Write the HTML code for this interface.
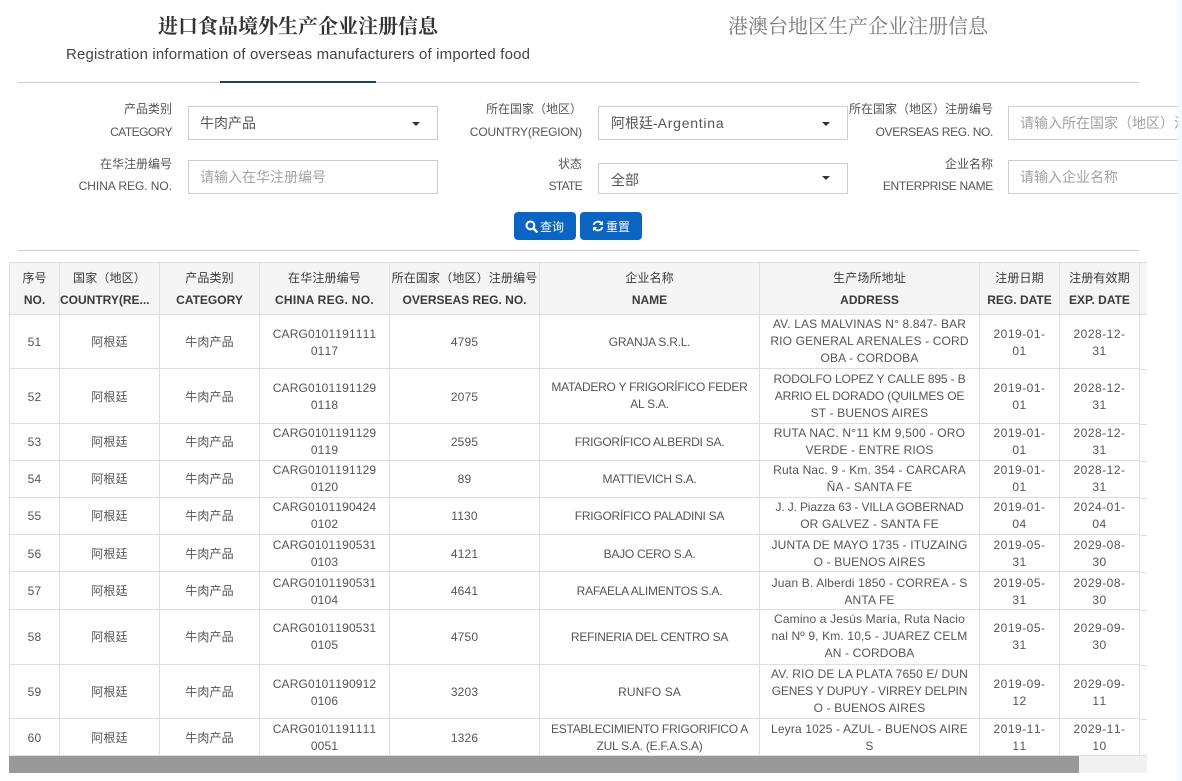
<!DOCTYPE html>
<html lang="zh"><head><meta charset="utf-8"><title>进口食品境外生产企业注册信息</title>
<style>
html,body{margin:0;padding:0;background:#fff;}
body{width:1182px;height:781px;overflow:hidden;position:relative;font-family:"Liberation Sans","Noto Sans CJK SC",sans-serif;color:#555;}
.a{position:absolute;white-space:nowrap;}
.t1{font-family:"Liberation Serif","Noto Serif CJK SC",serif;font-size:20px;line-height:26px;}
.l{font-size:12px;line-height:16px;text-align:right;color:#555;}
.box{position:absolute;box-sizing:border-box;border:1px solid #ccc;background:#fff;font-size:14px;color:#555;padding-left:12px;white-space:nowrap;overflow:hidden;}
.ph{color:#a3a3a3;padding-left:11px;}
.arrow{position:absolute;width:0;height:0;border-left:4.5px solid transparent;border-right:4.5px solid transparent;border-top:4.5px solid #333;}
.btn{position:absolute;top:212px;height:28px;width:62px;border-radius:4px;background:#0a64c2;color:#fff;font-size:12px;line-height:28px;}
.btn span{position:absolute;top:1px;}
table{position:absolute;left:9px;top:262px;border-collapse:collapse;table-layout:fixed;width:1131px;}
td,th{border:1px solid #e3dcdc;padding:0;text-align:center;font-size:12px;line-height:17px;color:#555;font-weight:normal;white-space:nowrap;overflow:hidden;letter-spacing:.15px;}
th{background:#f5f5f5;line-height:22px;color:#3a3a3a;}
th b{font-weight:bold;letter-spacing:0;}
tr.p td{padding-top:2px;}
tr.p td.u{padding-top:0;}
td.v{padding-bottom:2px;}
td:nth-child(4),td:nth-child(8),td:nth-child(9){font-kerning:none;letter-spacing:.15px;}
td:nth-child(8),td:nth-child(9){letter-spacing:.5px;}
td:nth-child(6){letter-spacing:-.25px;}
i{font-style:normal;}
.n{letter-spacing:-.15px;}
.w{letter-spacing:.22px;}
</style></head><body>
<div class="a t1" style="left:158px;top:14px;font-weight:bold;color:#333;">进口食品境外生产企业注册信息</div>
<div class="a" style="left:66px;top:46px;font-size:15px;letter-spacing:.17px;line-height:18px;color:#444;">Registration information of overseas manufacturers of imported food</div>
<div class="a t1" style="left:728px;top:14px;color:#777;">港澳台地区生产企业注册信息</div>
<div class="a" style="left:18px;top:82px;width:1121px;height:1px;background:#ccc;"></div>
<div class="a" style="left:220px;top:81px;width:156px;height:2px;background:#1f3f66;"></div>

<div class="a l" style="right:1010px;top:101px;">产品类别</div>
<div class="a l" style="right:1010px;top:124px;letter-spacing:-.55px;">CATEGORY</div>
<div class="a l" style="right:1010px;top:156px;">在华注册编号</div>
<div class="a l" style="right:1010px;top:178px;letter-spacing:-.05px;">CHINA REG. NO.</div>
<div class="a l" style="right:600px;top:101px;">所在国家（地区）</div>
<div class="a l" style="right:600px;top:124px;letter-spacing:-.15px;">COUNTRY(REGION)</div>
<div class="a l" style="right:600px;top:156px;">状态</div>
<div class="a l" style="right:600px;top:178px;letter-spacing:-.7px;">STATE</div>
<div class="a l" style="right:189px;top:101px;">所在国家（地区）注册编号</div>
<div class="a l" style="right:189px;top:124px;letter-spacing:-.35px;">OVERSEAS REG. NO.</div>
<div class="a l" style="right:189px;top:156px;">企业名称</div>
<div class="a l" style="right:189px;top:178px;letter-spacing:-.3px;">ENTERPRISE NAME</div>

<div class="box" style="left:188px;top:106px;width:250px;height:34px;line-height:32px;padding-left:11px;">牛肉产品</div>
<div class="arrow" style="left:412px;top:122px;"></div>
<div class="box ph" style="left:188px;top:160px;width:250px;height:34px;line-height:33px;">请输入在华注册编号</div>
<div class="box" style="left:598px;top:106px;width:250px;height:34px;line-height:32px;">阿根廷-<span style="letter-spacing:.75px">Argentina</span></div>
<div class="arrow" style="left:822px;top:122px;"></div>
<div class="box" style="left:598px;top:163px;width:250px;height:31px;line-height:32px;">全部</div>
<div class="arrow" style="left:822px;top:176px;"></div>
<div class="box ph" style="left:1008px;top:106px;width:170px;height:34px;line-height:33px;border-right:0;">请输入所在国家（地区）注册编号</div>
<div class="box ph" style="left:1008px;top:160px;width:170px;height:34px;line-height:33px;border-right:0;">请输入企业名称</div>

<div class="btn" style="left:514px;">
<svg style="position:absolute;left:11px;top:8px;" width="13" height="13" viewBox="0 0 12 12"><circle cx="5" cy="5" r="3.6" fill="none" stroke="#fff" stroke-width="1.9"/><path d="M7.6 7.6L10.8 10.8" stroke="#fff" stroke-width="2.2" stroke-linecap="round"/></svg>
<span style="left:26px;">查询</span></div>
<div class="btn" style="left:580px;">
<svg style="position:absolute;left:12px;top:8px;" width="12" height="12" viewBox="0 0 12 12"><path d="M1.6 5A4.5 4.5 0 0 1 9.4 3.2" fill="none" stroke="#fff" stroke-width="1.8"/><path d="M11 .8V5H6.8z" fill="#fff"/><path d="M10.4 7A4.5 4.5 0 0 1 2.6 8.8" fill="none" stroke="#fff" stroke-width="1.8"/><path d="M1 11.2V7H5.2z" fill="#fff"/></svg>
<span style="left:26px;">重置</span></div>
<div class="a" style="left:18px;top:250px;width:1121px;height:1px;background:#ccc;"></div>

<table>
<colgroup><col style="width:50px"><col style="width:100px"><col style="width:100px"><col style="width:130px"><col style="width:150px"><col style="width:220px"><col style="width:220px"><col style="width:80px"><col style="width:80px"></colgroup>
<tr style="height:52px"><th>序号<br><b>NO.</b></th><th>国家（地区）<br><b style="display:block;text-align:left;padding-left:0;margin-right:-5px;">COUNTRY(RE...</b></th><th>产品类别<br><b>CATEGORY</b></th><th>在华注册编号<br><b style="letter-spacing:.3px">CHINA REG. NO.</b></th><th>所在国家（地区）注册编号<br><b>OVERSEAS REG. NO.</b></th><th>企业名称<br><b>NAME</b></th><th>生产场所地址<br><b>ADDRESS</b></th><th>注册日期<br><b>REG. DATE</b></th><th>注册有效期<br><b>EXP. DATE</b></th></tr>
<tr class="p" style="height:54px"><td>51</td><td>阿根廷</td><td>牛肉产品</td><td>CARG0101191111<br>0117</td><td>4795</td><td>GRANJA S.R.L.</td><td class="u">AV. LAS MALVINAS N° 8.847- BAR<br>RIO GENERAL ARENALES - CORD<br>OBA - CORDOBA</td><td>2019-01-<br>01</td><td>2028-12-<br>31</td></tr>
<tr class="p" style="height:55px"><td>52</td><td>阿根廷</td><td>牛肉产品</td><td>CARG0101191129<br>0118</td><td>2075</td><td class="u">MATADERO Y FRIGORÍFICO FEDER<br>AL S.A.</td><td class="u"><i class="n">RODOLFO LOPEZ Y CALLE 895 - B</i><br><i class="n">ARRIO EL DORADO (QUILMES OE</i><br>ST - BUENOS AIRES</td><td>2019-01-<br>01</td><td>2028-12-<br>31</td></tr>
<tr style="height:37px"><td>53</td><td>阿根廷</td><td>牛肉产品</td><td>CARG0101191129<br>0119</td><td>2595</td><td>FRIGORÍFICO ALBERDI SA.</td><td><i class="w">RUTA NAC. N°11 KM 9,500 - ORO</i><br>VERDE - ENTRE RIOS</td><td>2019-01-<br>01</td><td>2028-12-<br>31</td></tr>
<tr style="height:37px"><td>54</td><td>阿根廷</td><td>牛肉产品</td><td>CARG0101191129<br>0120</td><td>89</td><td>MATTIEVICH S.A.</td><td>Ruta Nac. 9 - Km. 354 - CARCARA<br>ÑA - SANTA FE</td><td>2019-01-<br>01</td><td>2028-12-<br>31</td></tr>
<tr style="height:37px"><td>55</td><td>阿根廷</td><td>牛肉产品</td><td>CARG0101190424<br>0102</td><td>1130</td><td>FRIGORÍFICO PALADINI SA</td><td><i class="n">J. J. Piazza 63 - VILLA GOBERNAD</i><br>OR GALVEZ - SANTA FE</td><td>2019-01-<br>04</td><td>2024-01-<br>04</td></tr>
<tr class="p" style="height:37px"><td>56</td><td>阿根廷</td><td>牛肉产品</td><td>CARG0101190531<br>0103</td><td>4121</td><td>BAJO CERO S.A.</td><td>JUNTA DE MAYO 1735 - ITUZAING<br>O - BUENOS AIRES</td><td>2019-05-<br>31</td><td>2029-08-<br>30</td></tr>
<tr class="p" style="height:38px"><td>57</td><td>阿根廷</td><td>牛肉产品</td><td>CARG0101190531<br>0104</td><td>4641</td><td>RAFAELA ALIMENTOS S.A.</td><td>Juan B. Alberdi 1850 - CORREA - S<br>ANTA FE</td><td>2019-05-<br>31</td><td>2029-08-<br>30</td></tr>
<tr style="height:55px"><td>58</td><td>阿根廷</td><td>牛肉产品</td><td>CARG0101190531<br>0105</td><td>4750</td><td>REFINERIA DEL CENTRO SA</td><td class="v">Camino a Jesús María, Ruta Nacio<br>nal Nº 9, Km. 10,5 - JUAREZ CELM<br>AN - CORDOBA</td><td>2019-05-<br>31</td><td>2029-09-<br>30</td></tr>
<tr class="p" style="height:54px"><td>59</td><td>阿根廷</td><td>牛肉产品</td><td>CARG0101190912<br>0106</td><td>3203</td><td><i style="letter-spacing:.1px">RUNFO SA</i></td><td class="u">AV. RIO DE LA PLATA 7650 E/ DUN<br><i class="n">GENES Y DUPUY - VIRREY DELPIN</i><br>O - BUENOS AIRES</td><td>2019-09-<br>12</td><td>2029-09-<br>11</td></tr>
<tr class="p" style="height:36px"><td>60</td><td>阿根廷</td><td>牛肉产品</td><td>CARG0101191111<br>0051</td><td>1326</td><td>ESTABLECIMIENTO FRIGORIFICO A<br>ZUL S.A. (E.F.A.S.A)</td><td>Leyra 1025 - AZUL - BUENOS AIRE<br>S</td><td>2019-11-<br>11</td><td>2029-11-<br>10</td></tr>
</table>
<div class="a" style="left:1140px;top:262px;width:7px;background:#f5f5f5;border-top:1px solid #e3dcdc;border-bottom:1px solid #e3dcdc;box-sizing:border-box;height:53px;"></div>
<div class="a" style="left:1140px;top:369px;width:7px;height:1px;background:#e3dcdc;"></div>
<div class="a" style="left:1140px;top:424px;width:7px;height:1px;background:#e3dcdc;"></div>
<div class="a" style="left:1140px;top:461px;width:7px;height:1px;background:#e3dcdc;"></div>
<div class="a" style="left:1140px;top:498px;width:7px;height:1px;background:#e3dcdc;"></div>
<div class="a" style="left:1140px;top:535px;width:7px;height:1px;background:#e3dcdc;"></div>
<div class="a" style="left:1140px;top:572px;width:7px;height:1px;background:#e3dcdc;"></div>
<div class="a" style="left:1140px;top:610px;width:7px;height:1px;background:#e3dcdc;"></div>
<div class="a" style="left:1140px;top:665px;width:7px;height:1px;background:#e3dcdc;"></div>
<div class="a" style="left:1140px;top:719px;width:7px;height:1px;background:#e3dcdc;"></div>
<div class="a" style="left:1140px;top:755px;width:7px;height:1px;background:#e3dcdc;"></div>
<div class="a" style="left:9px;top:756px;width:1138px;height:17px;background:#f1f1f1;"></div>
<div class="a" style="left:9px;top:756px;width:1070px;height:17px;background:#999;"></div>
<div class="a" style="left:1178px;top:0;width:4px;height:781px;background:#f5f8fc;"></div>
</body></html>
